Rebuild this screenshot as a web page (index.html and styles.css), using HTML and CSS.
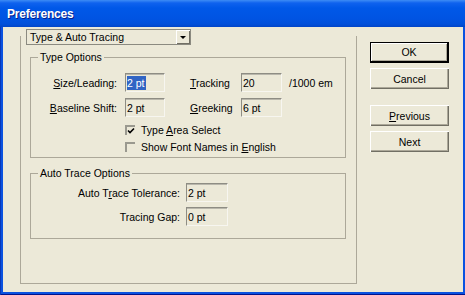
FILE: index.html
```html
<!DOCTYPE html>
<html>
<head>
<meta charset="utf-8">
<link rel="stylesheet" href="styles.css">
</head>
<body>
<div class="window">
  <div class="titlebar"><span class="title">Preferences</span></div>
  <div class="client">
    <div class="panel">
      <div class="combo">
        <span class="combo-text">Type &amp; Auto Tracing</span>
        <span class="combo-btn"><span class="arrow"></span></span>
      </div>
      <fieldset class="group type-group">
        <legend>Type Options</legend>
        <div class="type-grid">
          <span class="label lab1"><u>S</u>ize/Leading:</span>
          <span class="edit"><span class="sel">2 pt</span></span>
          <span class="label lab2"><u>T</u>racking</span>
          <span class="edit">20</span>
          <span class="unit">/1000 em</span>
          <span class="label lab1"><u>B</u>aseline Shift:</span>
          <span class="edit">2 pt</span>
          <span class="label lab2"><u>G</u>reeking</span>
          <span class="edit">6 pt</span>
          <span class="unit"></span>
        </div>
        <div class="check-row first">
          <span class="check"><svg width="8" height="8" viewBox="0 0 8 8"><polyline points="1,3.5 3,5.5 7,1.5" fill="none" stroke="#000" stroke-width="1.6"/></svg></span>
          <span class="check-label">Type <u>A</u>rea Select</span>
        </div>
        <div class="check-row second">
          <span class="check"></span>
          <span class="check-label">Show Font Names in <u>E</u>nglish</span>
        </div>
      </fieldset>
      <fieldset class="group trace-group">
        <legend>Auto Trace Options</legend>
        <div class="trace-grid">
          <span class="label lab3">Auto T<u>r</u>ace Tolerance:</span>
          <span class="edit">2 pt</span>
          <span class="label lab3">Tracing Gap:</span>
          <span class="edit">0 pt</span>
        </div>
      </fieldset>
    </div>
    <div class="buttons">
      <div class="btn default">OK</div>
      <div class="btn cancel">Cancel</div>
      <div class="btn prev"><span><u>P</u>revious</span></div>
      <div class="btn next">Next</div>
    </div>
  </div>
</div>
</body>
</html>
```
FILE: styles.css
```css
html, body {
  margin: 0;
  padding: 0;
}
body {
  font: 10.5px "Liberation Sans", Arial, sans-serif;
  color: #000;
}
u {
  text-decoration: underline;
  text-underline-offset: 1px;
}
.window {
  width: 465px;
  height: 295px;
  display: flex;
  flex-direction: column;
  background: #0a52e0;
  box-shadow: inset 1px 0 #0838b8, inset 0 -1px #00138c;
}
.titlebar {
  height: 27px;
  flex: none;
  display: flex;
  align-items: center;
  padding-left: 7px;
  background: linear-gradient(to bottom, #3d8cf5 0, #0f62ee 3px, #0058e8 8px, #0054e3 18px, #0150da 24px, #0145c8 27px);
}
.title {
  color: #fff;
  font-weight: bold;
  font-size: 12px;
  letter-spacing: -0.2px;
  text-shadow: 1px 1px #0a1e8a;
  padding-top: 1px;
}
.client {
  flex: 1;
  margin: 0 2px 3px 3px;
  background: #ece9d8;
  display: flex;
  align-items: flex-start;
}
.panel {
  box-sizing: border-box;
  width: 337px;
  height: 248px;
  margin: 9px 0 0 17px;
  border: 1px solid #aca899;
  border-top: none;
}
.combo {
  box-sizing: border-box;
  width: 165px;
  height: 16px;
  margin: -7px 0 0 5px;
  border: 1px solid #8b8a80;
  background: #ece9d8;
  display: flex;
  align-items: center;
}
.combo-text {
  flex: 1;
  padding-left: 3px;
  line-height: 14px;
}
.combo-btn {
  width: 14px;
  height: 14px;
  box-sizing: border-box;
  box-shadow: inset 1px 1px #fff, inset -1px -1px #716f64;
  display: flex;
  align-items: center;
  justify-content: center;
}
.arrow {
  width: 0;
  height: 0;
  border-left: 3px solid transparent;
  border-right: 3px solid transparent;
  border-top: 3px solid #000;
  margin-top: 1px;
}
.group {
  box-sizing: border-box;
  width: 316px;
  min-width: 0;
  margin: 0 0 0 9px;
  padding: 0;
  border: 1px solid #aca899;
}
.group legend {
  margin-left: 7px;
  padding: 0 2px;
  line-height: 13px;
}
.type-group {
  margin-top: 6px;
  padding-bottom: 4px;
}
.trace-group {
  margin-top: 9px;
  padding-bottom: 12px;
}
.type-grid {
  display: grid;
  grid-template-columns: 94px 40px 76px 41px auto;
  grid-auto-rows: 19px;
  row-gap: 6px;
  margin-top: 9px;
  align-items: center;
}
.trace-grid {
  display: grid;
  grid-template-columns: 155px 42px;
  grid-auto-rows: 19px;
  row-gap: 5px;
  margin-top: 3px;
  align-items: center;
}
.label {
  white-space: nowrap;
}
.lab1 {
  text-align: right;
  padding-right: 8px;
}
.lab2 {
  padding-left: 25px;
}
.lab3 {
  text-align: right;
  padding-right: 6px;
}
.unit {
  padding-left: 7px;
  white-space: nowrap;
}
.edit {
  box-sizing: border-box;
  height: 19px;
  border-top: 1px solid #8e8d84;
  border-left: 1px solid #8e8d84;
  border-right: 1px solid #f7f6f0;
  border-bottom: 1px solid #f7f6f0;
  box-shadow: inset 0 1px #b9b7ac;
  display: flex;
  align-items: center;
  padding-left: 1px;
  white-space: nowrap;
}
.sel {
  background: #3165c4;
  color: #fff;
  line-height: 14px;
  padding-right: 1px;
}
.check-row {
  display: flex;
  align-items: center;
  height: 13px;
  margin-left: 94px;
}
.check-row.first {
  margin-top: 6px;
}
.check-row.second {
  margin-top: 4px;
}
.check {
  box-sizing: border-box;
  width: 10px;
  height: 10px;
  border-top: 2px solid #9a998f;
  border-left: 2px solid #9a998f;
  display: flex;
  align-items: flex-end;
  justify-content: flex-start;
}
.check-label {
  margin-left: 6px;
  white-space: nowrap;
}
.buttons {
  display: flex;
  flex-direction: column;
  margin: 15px 0 0 13px;
}
.btn {
  box-sizing: border-box;
  width: 79px;
  height: 21px;
  display: flex;
  align-items: center;
  justify-content: center;
  box-shadow: inset 1px 1px #fff, inset -1px -1px #716f64, inset -2px -2px #aca899;
}
.btn.default {
  border: 1px solid #000;
  border-right-width: 2px;
  border-bottom-width: 2px;
  box-shadow: inset 1px 1px #fff, inset -1px -1px #aca899;
}
.btn.cancel {
  margin-top: 5px;
}
.btn.prev {
  margin-top: 16px;
}
.btn.next {
  margin-top: 5px;
}
```
